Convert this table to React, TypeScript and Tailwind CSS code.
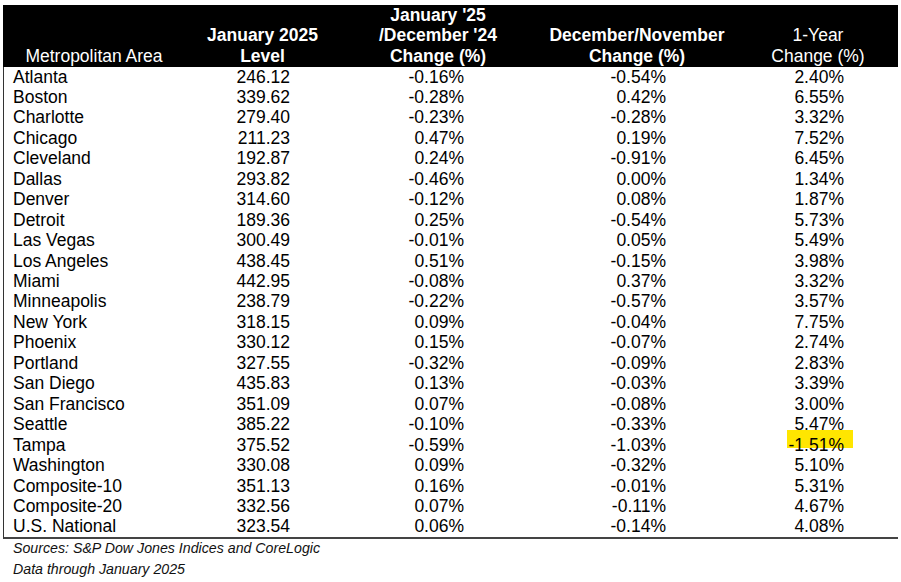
export default function App() {
  const rows = [
    ["Atlanta", "246.12", "-0.16%", "-0.54%", "2.40%"],
    ["Boston", "339.62", "-0.28%", "0.42%", "6.55%"],
    ["Charlotte", "279.40", "-0.23%", "-0.28%", "3.32%"],
    ["Chicago", "211.23", "0.47%", "0.19%", "7.52%"],
    ["Cleveland", "192.87", "0.24%", "-0.91%", "6.45%"],
    ["Dallas", "293.82", "-0.46%", "0.00%", "1.34%"],
    ["Denver", "314.60", "-0.12%", "0.08%", "1.87%"],
    ["Detroit", "189.36", "0.25%", "-0.54%", "5.73%"],
    ["Las Vegas", "300.49", "-0.01%", "0.05%", "5.49%"],
    ["Los Angeles", "438.45", "0.51%", "-0.15%", "3.98%"],
    ["Miami", "442.95", "-0.08%", "0.37%", "3.32%"],
    ["Minneapolis", "238.79", "-0.22%", "-0.57%", "3.57%"],
    ["New York", "318.15", "0.09%", "-0.04%", "7.75%"],
    ["Phoenix", "330.12", "0.15%", "-0.07%", "2.74%"],
    ["Portland", "327.55", "-0.32%", "-0.09%", "2.83%"],
    ["San Diego", "435.83", "0.13%", "-0.03%", "3.39%"],
    ["San Francisco", "351.09", "0.07%", "-0.08%", "3.00%"],
    ["Seattle", "385.22", "-0.10%", "-0.33%", "5.47%"],
    ["Tampa", "375.52", "-0.59%", "-1.03%", "-1.51%"],
    ["Washington", "330.08", "0.09%", "-0.32%", "5.10%"],
    ["Composite-10", "351.13", "0.16%", "-0.01%", "5.31%"],
    ["Composite-20", "332.56", "0.07%", "-0.11%", "4.67%"],
    ["U.S. National", "323.54", "0.06%", "-0.14%", "4.08%"],
  ]

  const cols = "grid grid-cols-[182px_155px_196px_202px_160px]"

  return (
    <div className="bg-white w-[901px] h-[582px] pt-[5px] pl-[3px] font-['Liberation_Sans',Arial,sans-serif] text-black">
      <div className="w-[895px]">
        {/* Header */}
        <div className={`${cols} bg-black text-white text-[17.5px] leading-[20.4px] h-[61.5px] pb-[1px]`}>
          <div className="flex flex-col justify-end text-center">Metropolitan Area</div>
          <div className="flex flex-col justify-end text-center font-bold">
            <span>January 2025</span>
            <span>Level</span>
          </div>
          <div className="flex flex-col justify-end text-center font-bold">
            <span>January '25</span>
            <span>/December '24</span>
            <span>Change (%)</span>
          </div>
          <div className="flex flex-col justify-end text-center font-bold">
            <span>December/November</span>
            <span>Change (%)</span>
          </div>
          <div className="flex flex-col justify-end text-center">
            <span>1-Year</span>
            <span>Change (%)</span>
          </div>
        </div>

        {/* Body */}
        <div className="border-l border-l-[#333] border-b-2 border-b-[#444] text-[17.5px] leading-[20.46px]">
          {rows.map((r, i) => (
            <div key={i} className={`${cols} h-[20.46px]`}>
              <div className="pl-[9px] whitespace-nowrap">{r[0]}</div>
              <div className="text-right pr-[51px]">{r[1]}</div>
              <div className="text-right pr-[73px]">{r[2]}</div>
              <div className="text-right pr-[73px]">{r[3]}</div>
              <div className="relative text-right pr-[55px]">
                {r[0] === "Tampa" && (
                  <div className="absolute left-[48px] top-[-5px] w-[66px] h-[18px] bg-[#ffe600]" />
                )}
                <span className="relative">{r[4]}</span>
              </div>
            </div>
          ))}
        </div>

        {/* Footer */}
        <div className="pl-[10px] -mt-[1px] italic text-[14.2px] leading-[21px] text-[#111]">
          <p>Sources: S&amp;P Dow Jones Indices and CoreLogic</p>
          <p>Data through January 2025</p>
        </div>
      </div>
    </div>
  )
}
